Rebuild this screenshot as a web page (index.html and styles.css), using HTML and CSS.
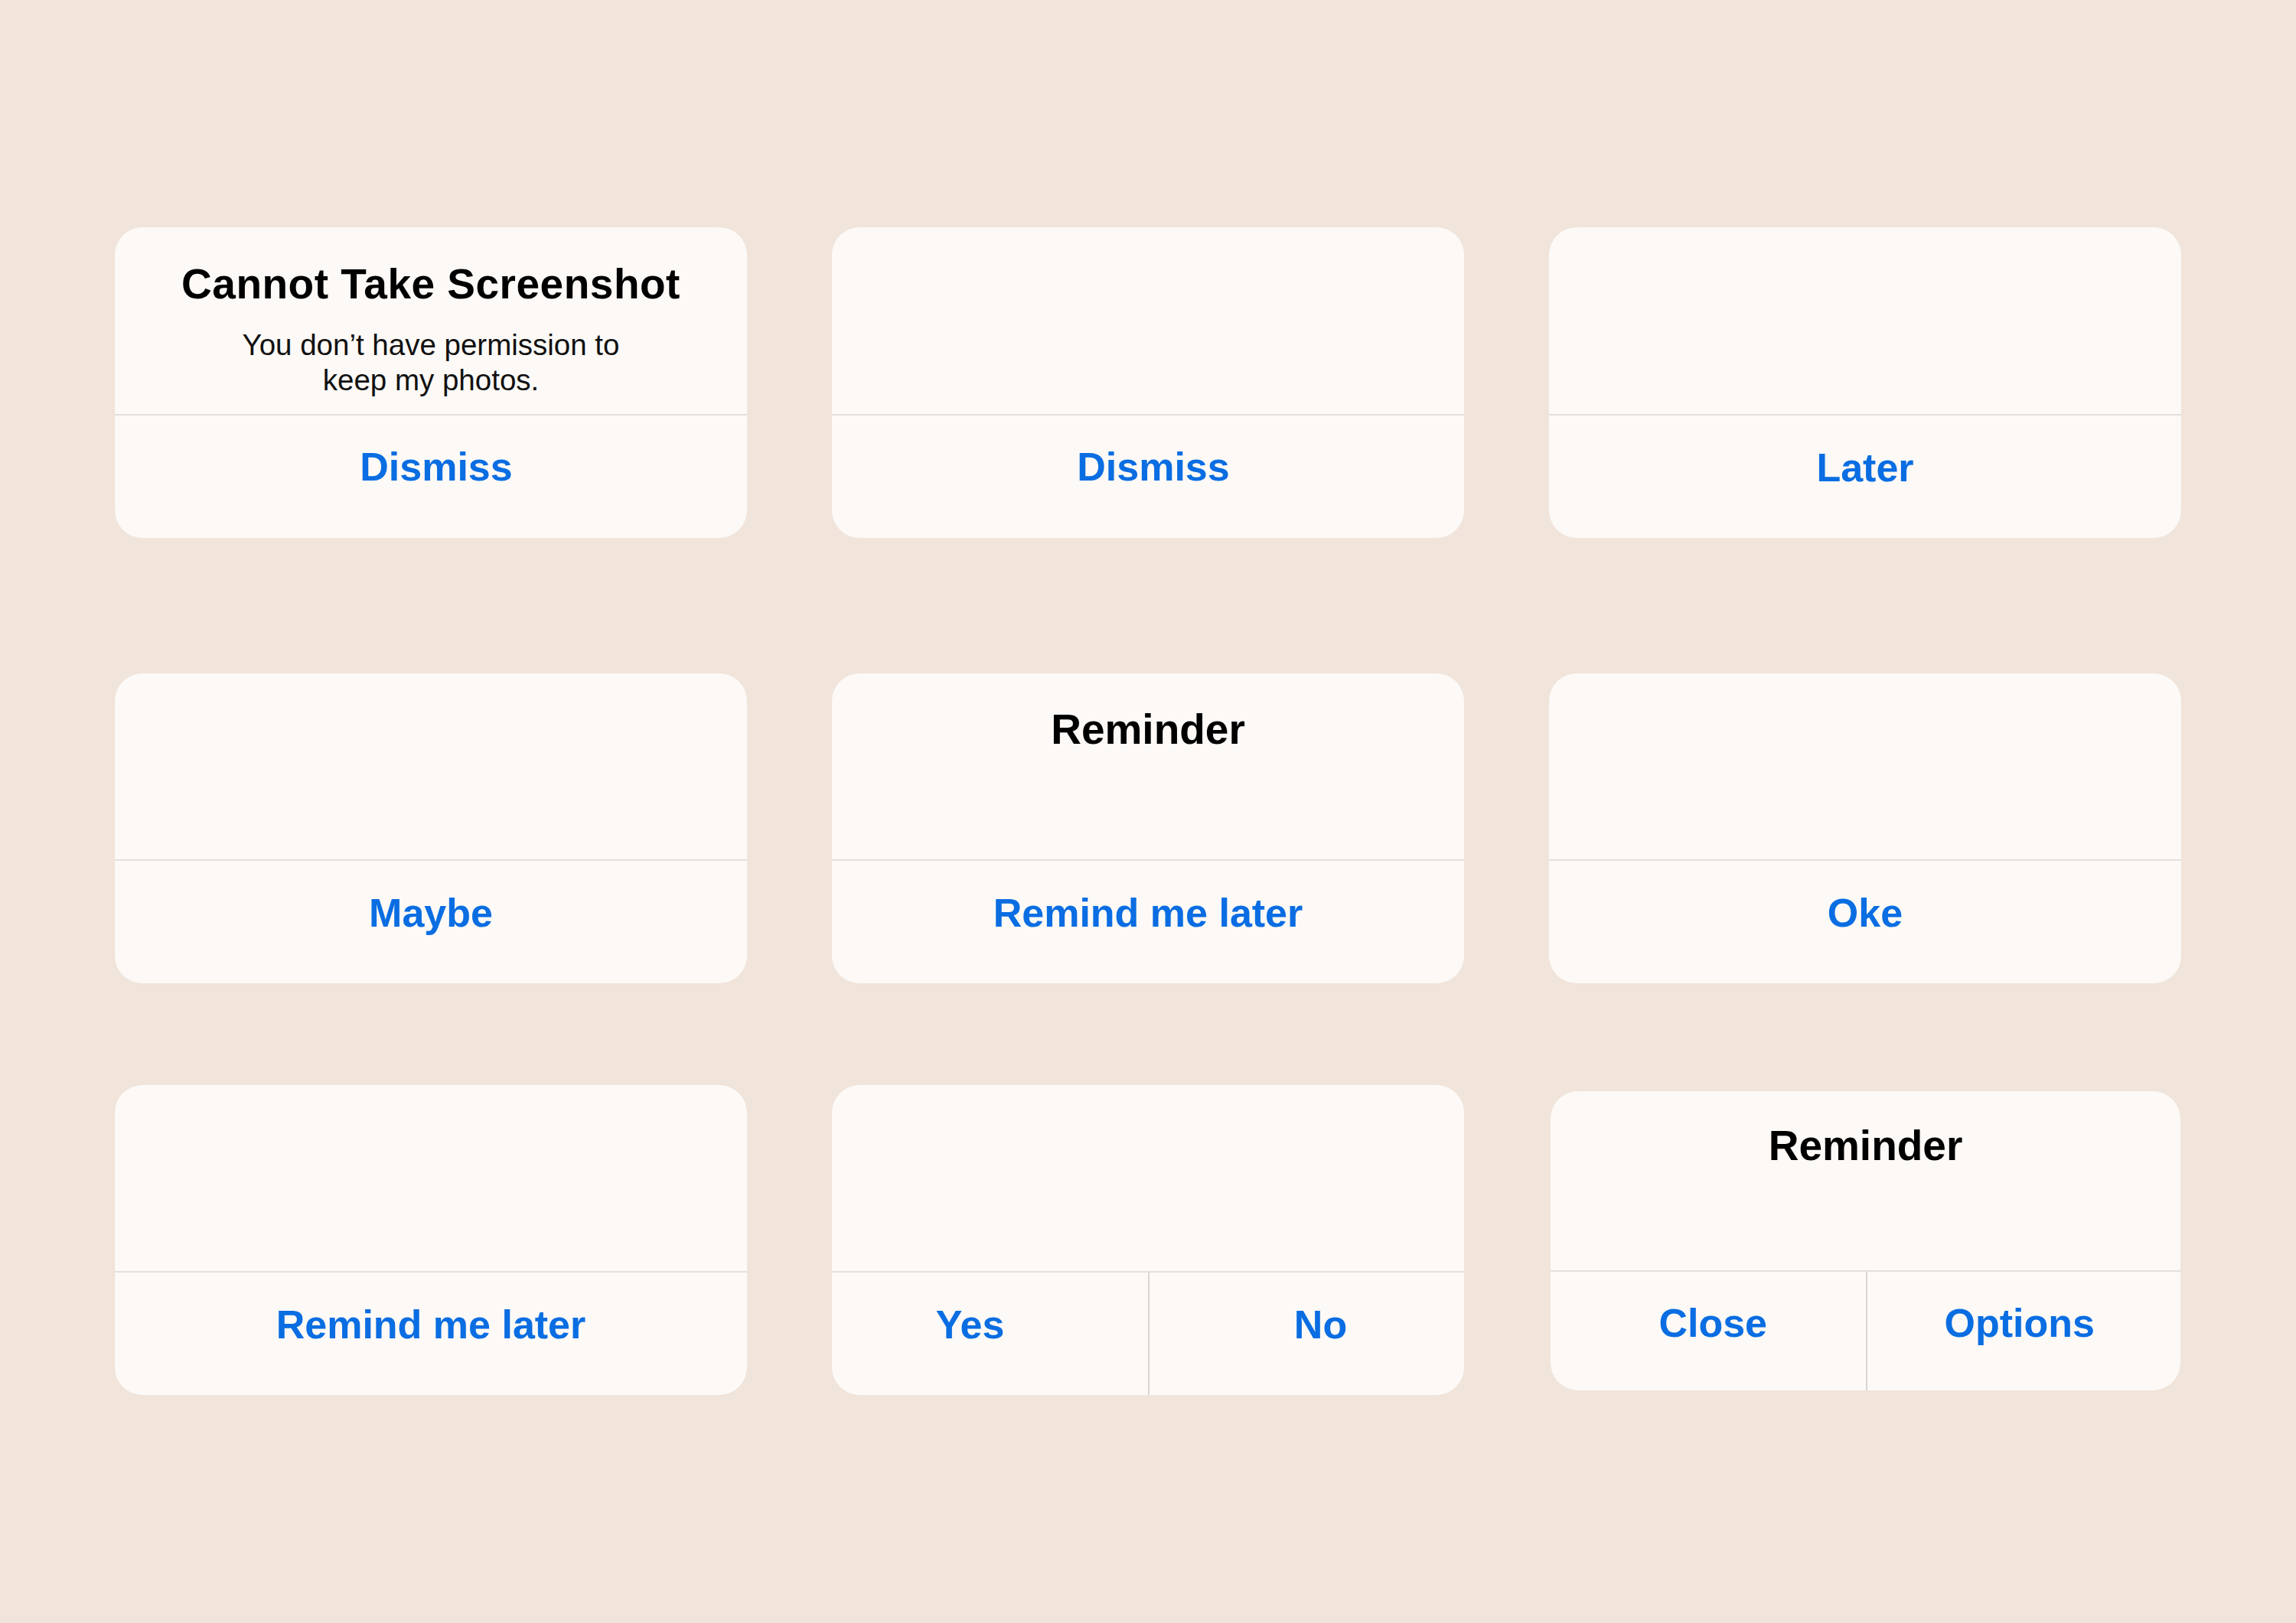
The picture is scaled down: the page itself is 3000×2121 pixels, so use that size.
FILE: index.html
```html
<!DOCTYPE html>
<html lang="en">
<head>
<meta charset="utf-8">
<title>Alerts</title>
<link rel="stylesheet" href="styles.css">
</head>
<body>
<main class="board">
  <section class="row row-1">
    <div class="alert">
      <div class="alert-body">
        <h2 class="alert-title title-wide">Cannot Take Screenshot</h2>
        <p class="alert-message">You don’t have permission to keep my photos.</p>
      </div>
      <div class="alert-actions">
        <button class="action action-shift">Dismiss</button>
      </div>
    </div>
    <div class="alert">
      <div class="alert-body"></div>
      <div class="alert-actions">
        <button class="action action-shift">Dismiss</button>
      </div>
    </div>
    <div class="alert">
      <div class="alert-body"></div>
      <div class="alert-actions">
        <button class="action action-low">Later</button>
      </div>
    </div>
  </section>

  <section class="row row-2">
    <div class="alert alert-405">
      <div class="alert-body"></div>
      <div class="alert-actions">
        <button class="action">Maybe</button>
      </div>
    </div>
    <div class="alert alert-405">
      <div class="alert-body">
        <h2 class="alert-title title-tight">Reminder</h2>
      </div>
      <div class="alert-actions">
        <button class="action">Remind me later</button>
      </div>
    </div>
    <div class="alert alert-405">
      <div class="alert-body"></div>
      <div class="alert-actions">
        <button class="action">Oke</button>
      </div>
    </div>
  </section>

  <section class="row row-3">
    <div class="alert alert-405">
      <div class="alert-body"></div>
      <div class="alert-actions">
        <button class="action">Remind me later</button>
      </div>
    </div>
    <div class="alert alert-405">
      <div class="alert-body"></div>
      <div class="alert-actions split">
        <button class="action yes">Yes</button>
        <button class="action no">No</button>
      </div>
    </div>
    <div class="alert alert-compact">
      <div class="alert-body">
        <h2 class="alert-title title-compact">Reminder</h2>
      </div>
      <div class="alert-actions split actions-compact">
        <button class="action close">Close</button>
        <button class="action options">Options</button>
      </div>
    </div>
  </section>
</main>
</body>
</html>
```

FILE: styles.css
```css
* {
  box-sizing: border-box;
}

html, body {
  margin: 0;
  padding: 0;
}

body {
  background: #f0e4db;
  font-family: "Liberation Sans", Arial, Helvetica, sans-serif;
  width: 3000px;
  height: 2121px;
  overflow: hidden;
}

.board {
  padding: 0 150px;
}

.row {
  display: grid;
  grid-template-columns: repeat(3, 826px);
  column-gap: 111px;
  align-items: start;
}

.row-1 {
  padding-top: 297px;
}

.row-2 {
  margin-top: 177px;
}

.row-3 {
  margin-top: 133px;
}

.alert {
  background: #fcf9f6;
  border-radius: 36px;
  height: 406px;
  display: flex;
  flex-direction: column;
  overflow: hidden;
}

.alert-405 {
  height: 405px;
}

.alert-compact {
  height: 391px;
  margin: 8px 1px 0 2px;
}

.alert-body {
  flex: 1;
  display: flex;
  flex-direction: column;
  align-items: center;
  text-align: center;
  padding-top: 42px;
}

.alert-title {
  margin: 0;
  font-size: 55px;
  line-height: 64px;
  font-weight: 700;
  color: #000;
}

.title-wide {
  letter-spacing: 0.5px;
}

.title-tight {
  margin-top: -1px;
}

.title-compact {
  margin-top: -3px;
}

.alert-message {
  margin: 25px 0 0;
  max-width: 560px;
  font-size: 38.5px;
  line-height: 46px;
  font-weight: 400;
  color: #111;
}

.alert-actions {
  height: 162px;
  flex: none;
  border-top: 2px solid #e4e0dc;
  display: flex;
}

.actions-compact {
  height: 157px;
}

.action {
  flex: 1;
  margin: 0;
  border: 0;
  background: transparent;
  font-family: inherit;
  font-size: 52px;
  line-height: 60px;
  font-weight: 700;
  color: #0a6de2;
  text-align: center;
  padding: 37px 0 63px;
  align-self: stretch;
  display: block;
  cursor: pointer;
}

.row-2 .action,
.row-3 .action {
  padding-top: 38px;
  padding-bottom: 62px;
}

.action-shift {
  padding-left: 14px;
}

.action-low {
  padding-top: 38px;
  padding-bottom: 62px;
}

.split {
  display: grid;
  grid-template-columns: repeat(2, minmax(0, 1fr));
}

.split .action + .action {
  border-left: 2px solid #d9d6d3;
}

.row-3 .yes {
  padding-right: 52px;
}

.row-3 .no {
  padding-left: 36px;
}

.row-3 .actions-compact .action {
  padding-top: 37px;
  padding-bottom: 58px;
}

.row-3 .actions-compact .close {
  padding-left: 13px;
}

.row-3 .actions-compact .options {
  padding-right: 11px;
}
```
